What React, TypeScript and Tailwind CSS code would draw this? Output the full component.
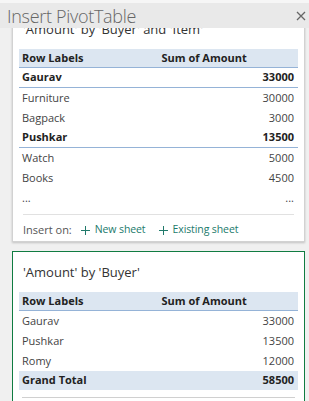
import React from 'react';

type Row = { label: string; value: string; bold?: boolean; line?: boolean };

const detailRows: Row[] = [
  { label: 'Gaurav', value: '33000', bold: true, line: true },
  { label: 'Furniture', value: '30000' },
  { label: 'Bagpack', value: '3000' },
  { label: 'Pushkar', value: '13500', bold: true, line: true },
  { label: 'Watch', value: '5000' },
  { label: 'Books', value: '4500' },
  { label: '...', value: '...' },
];

const buyerRows: Row[] = [
  { label: 'Gaurav', value: '33000' },
  { label: 'Pushkar', value: '13500' },
  { label: 'Romy', value: '12000' },
];

const PlusIcon = () => (
  <svg width="9" height="9" viewBox="0 0 9 9" className="mr-[5px]">
    <path d="M4.5 0V9M0 4.5H9" stroke="currentColor" strokeWidth="1" />
  </svg>
);

const TableHead = () => (
  <div className="grid grid-cols-2 h-[19px] items-center bg-[#dce6f1] border-b border-[#95b3d7] font-bold text-[#222]">
    <span className="pl-[3px]">Row Labels</span>
    <span className="pl-[3px]">Sum of Amount</span>
  </div>
);

const DataRow = ({ row }: { row: Row }) => (
  <div
    className={`grid grid-cols-2 h-[20px] items-center ${
      row.bold ? 'font-bold text-[#222]' : 'text-[#444]'
    } ${row.line ? 'border-b border-[#95b3d7]' : ''}`}
  >
    <span className="pl-[3px]">{row.label}</span>
    <span className="text-right pr-[4px]">{row.value}</span>
  </div>
);

export default function App() {
  return (
    <div
      className="w-[309px] h-[401px] overflow-hidden bg-[#f0f0f0] flex flex-col text-[11px]"
      style={{ fontFamily: '"Open Sans", "Noto Sans", sans-serif' }}
    >
      {/* Task pane title */}
      <div className="h-[28px] shrink-0 bg-[#e9e9e9] border-t-[3px] border-[#f6f6f6] flex items-center justify-between pl-[7px] pr-[3px] relative z-10">
        <span className="text-[18px] font-light tracking-[-0.3px] text-[#666] leading-none">Insert PivotTable</span>
        <svg width="10" height="10" viewBox="0 0 10 10" className="text-[#666]">
          <path d="M1 1L9 9M9 1L1 9" stroke="currentColor" strokeWidth="1.3" />
        </svg>
      </div>

      {/* Scrolled list of recommendations */}
      <div className="flex-1 overflow-hidden pl-[12px] pr-[4px]">
        <div className="-mt-[20px] flex flex-col gap-[9px]">
          <div className="bg-white border border-[#d2d2d2] shadow-[0_1px_2px_rgba(0,0,0,0.2)] px-[6px] pt-[10px]">
            <div className="h-[20px] leading-[20px] text-[13px] text-[#333] pl-[4px] mb-[10px]">
              'Amount' by 'Buyer' and 'Item'
            </div>
            <TableHead />
            {detailRows.map((r, i) => (
              <DataRow key={i} row={r} />
            ))}
            <div className="mt-[6px] mx-[4px] border-t border-[#e1e1e1] h-[27px] pt-[4px] flex items-center">
              <span className="text-[#555] mr-[9px]">Insert on:</span>
              <span className="flex items-center text-[#217a6b] text-[10.5px] tracking-[-0.1px] mr-[13px]">
                <PlusIcon />
                New sheet
              </span>
              <span className="flex items-center text-[#217a6b] text-[10.5px] tracking-[-0.1px]">
                <PlusIcon />
                Existing sheet
              </span>
            </div>
          </div>

          <div className="bg-white border border-[#107c41] px-[6px] pt-[10px] pb-[20px]">
            <div className="h-[20px] leading-[20px] text-[13px] text-[#333] pl-[4px] mb-[10px]">
              'Amount' by 'Buyer'
            </div>
            <TableHead />
            {buyerRows.map((r, i) => (
              <DataRow key={i} row={r} />
            ))}
            <div className="grid grid-cols-2 h-[19px] items-center bg-[#dce6f1] font-bold text-[#222]">
              <span className="pl-[3px]">Grand Total</span>
              <span className="text-right pr-[4px]">58500</span>
            </div>
            <div className="mt-[7px] mx-[3px] border-t border-[#d0d0d0] h-[10px]" />
          </div>
        </div>
      </div>
    </div>
  );
}
